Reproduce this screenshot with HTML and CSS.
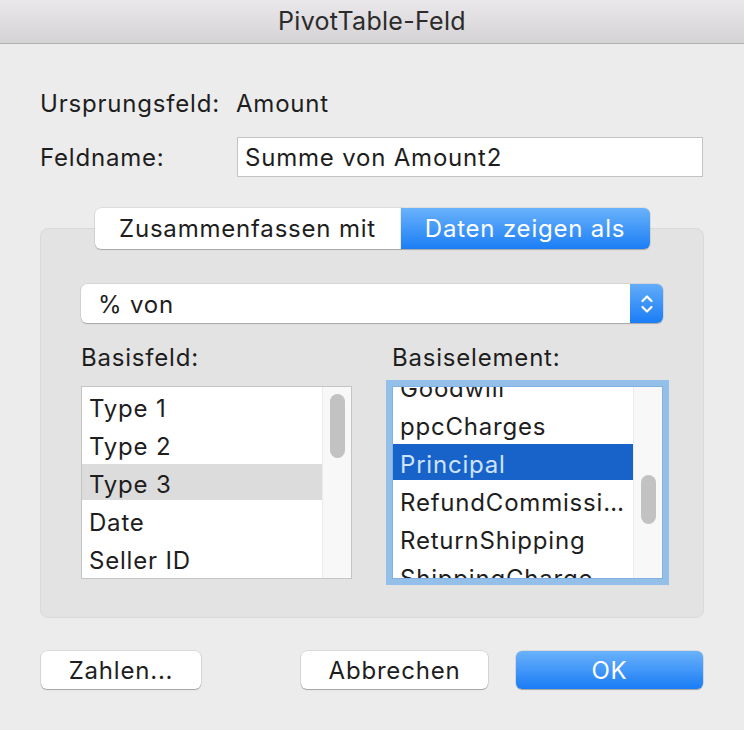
FILE: index.html
```html
<!DOCTYPE html>
<html lang="de">

<head>
  <meta charset="UTF-8" />
  <meta name="viewport" content="width=device-width, initial-scale=1.0" />
  <title>PivotTable-Feld</title>
  <link rel="stylesheet" href="styles.css">
</head>

<body>
  <div class="window">
    <div class="titlebar">PivotTable-Feld</div>

    <div class="content">
      <div class="field-row origin">
        <span class="label">Ursprungsfeld:</span>
        <span class="value">Amount</span>
      </div>
      <div class="field-row">
        <span class="label">Feldname:</span>
        <input class="text-input" type="text" value="Summe von Amount2" />
      </div>

      <div class="group">
        <div class="segmented">
          <button class="seg">Zusammenfassen mit</button>
          <button class="seg active">Daten zeigen als</button>
        </div>

        <div class="popup">
          <span class="popup-text">% von</span>
          <span class="stepper">
            <svg width="14" height="22" viewBox="0 0 14 22">
              <path d="M2.5 8 L7 3.5 L11.5 8" fill="none" stroke="#fff" stroke-width="2.2" stroke-linecap="round" stroke-linejoin="round" />
              <path d="M2.5 14 L7 18.5 L11.5 14" fill="none" stroke="#fff" stroke-width="2.2" stroke-linecap="round" stroke-linejoin="round" />
            </svg>
          </span>
        </div>

        <div class="lists">
          <div class="list-col">
            <div class="list-label">Basisfeld:</div>
            <div class="listbox">
              <ul class="items">
                <li>Type 1</li>
                <li>Type 2</li>
                <li class="selected-gray">Type 3</li>
                <li>Date</li>
                <li>Seller ID</li>
              </ul>
              <div class="scrollbar">
                <div class="thumb thumb-top"></div>
              </div>
            </div>
          </div>

          <div class="list-col">
            <div class="list-label">Basiselement:</div>
            <div class="listbox focused">
              <ul class="items scrolled">
                <li>Goodwill</li>
                <li>ppcCharges</li>
                <li class="selected-blue">Principal</li>
                <li>RefundCommission</li>
                <li>ReturnShipping</li>
                <li>ShippingCharge</li>
              </ul>
              <div class="scrollbar">
                <div class="thumb thumb-mid"></div>
              </div>
            </div>
          </div>
        </div>
      </div>

      <div class="buttons">
        <button class="btn btn-numbers">Zahlen...</button>
        <div class="spacer"></div>
        <button class="btn btn-cancel">Abbrechen</button>
        <button class="btn btn-ok">OK</button>
      </div>
    </div>
  </div>
</body>

</html>
```

FILE: styles.css
```css
* {
  box-sizing: border-box;
}

body {
  margin: 0;
  background: #ececec;
  font-family: Inter, "Noto Sans", sans-serif;
  color: #1e1e1e;
  letter-spacing: 0.8px;
}

.window {
  width: 744px;
  height: 730px;
  background: #ececec;
  overflow: hidden;
}

.titlebar {
  height: 44px;
  line-height: 43px;
  text-align: center;
  font-size: 25px;
  letter-spacing: 0.3px;
  color: #2b2b2b;
  background: linear-gradient(#eae8ea, #d4d2d4);
  border-bottom: 1px solid #b1b1b1;
}

.content {
  padding: 39px 40px 0 40px;
}

.field-row {
  display: flex;
  align-items: center;
  height: 40px;
  font-size: 24px;
}

.field-row+.field-row {
  margin-top: 14px;
}

.field-row .label {
  width: 196px;
  flex: none;
}

.text-input {
  width: 466px;
  height: 40px;
  margin-left: 1px;
  padding: 0 7px;
  border: 1px solid #c3c3c3;
  background: #fff;
  font-family: inherit;
  font-size: 24px;
  letter-spacing: inherit;
  color: #1e1e1e;
  outline: none;
}

/* Gruppenfeld mit Segment-Steuerung */
.group {
  margin-top: 51px;
  padding: 0 40px 38px 40px;
  background: #e3e3e3;
  border: 1px solid #d9d9d9;
  border-radius: 8px;
}

.segmented {
  display: flex;
  justify-content: center;
  margin-top: -21px;
}

.seg {
  height: 41px;
  padding: 0;
  border: none;
  font-family: inherit;
  font-size: 24px;
  letter-spacing: inherit;
  background: #fff;
  color: #1e1e1e;
  box-shadow: 0 1px 1px rgba(0, 0, 0, 0.22), 0 0 0 0.5px rgba(0, 0, 0, 0.12);
}

.seg:first-child {
  width: 306px;
  border-radius: 6px 0 0 6px;
}

.seg.active {
  width: 249px;
  color: #fff;
  border-radius: 0 6px 6px 0;
  background: linear-gradient(#6ab2fb, #1b7ef5);
}

.popup {
  margin-top: 35px;
  height: 39px;
  display: flex;
  align-items: center;
  background: #fff;
  border-radius: 6px;
  box-shadow: 0 1px 1px rgba(0, 0, 0, 0.22), 0 0 0 0.5px rgba(0, 0, 0, 0.12);
  font-size: 24px;
}

.popup-text {
  flex: 1;
  padding-left: 17px;
  padding-top: 1px;
}

.stepper {
  width: 33px;
  height: 39px;
  display: flex;
  align-items: center;
  justify-content: center;
  border-radius: 0 6px 6px 0;
  background: linear-gradient(#62acfa, #1a7df5);
}

.lists {
  margin-top: 20px;
  display: flex;
  gap: 40px;
}

.list-col {
  width: 271px;
}

.list-label {
  height: 30px;
  line-height: 30px;
  font-size: 24px;
  margin-bottom: 13px;
}

.listbox {
  height: 193px;
  display: flex;
  background: #fff;
  border: 1px solid #c4c4c4;
  overflow: hidden;
}

.listbox.focused {
  border-color: #7fb1e3;
  box-shadow: 0 0 0 6px #93bfe8;
}

.items {
  flex: 1;
  min-width: 0;
  margin: 0;
  padding: 0;
  list-style: none;
  font-size: 24px;
}

.items.scrolled {
  margin-top: -20px;
}

.items li {
  height: 38px;
  line-height: 36px;
  padding: 3px 7px 0 7px;
  border-top: 1px solid transparent;
  border-bottom: 1px solid transparent;
  background-clip: padding-box;
  white-space: nowrap;
  overflow: hidden;
  text-overflow: ellipsis;
}

.items li.selected-gray {
  background-color: #dcdcdc;
}

.items li.selected-blue {
  background-color: #1763c9;
  color: #cfe3ff;
}

.scrollbar {
  width: 29px;
  flex: none;
  background: #f8f8f8;
  border-left: 1px solid #ebebeb;
  position: relative;
}

.thumb {
  position: absolute;
  left: 7px;
  width: 15px;
  border-radius: 8px;
  background: #c2c2c2;
}

.thumb-top {
  top: 7px;
  height: 64px;
}

.thumb-mid {
  top: 88px;
  height: 49px;
}

/* Schaltflächen unten */
.buttons {
  margin: 33px 1px 0 1px;
  display: flex;
  align-items: center;
}

.spacer {
  flex: 1;
}

.btn {
  height: 38px;
  padding: 0;
  border: none;
  border-radius: 6px;
  font-family: inherit;
  font-size: 24px;
  letter-spacing: inherit;
  color: #1e1e1e;
  background: #fff;
  box-shadow: 0 1px 1px rgba(0, 0, 0, 0.25), 0 0 0 0.5px rgba(0, 0, 0, 0.15);
}

.btn-numbers {
  width: 160px;
}

.btn-cancel {
  width: 187px;
}

.btn-ok {
  width: 187px;
  margin-left: 28px;
  color: #fff;
  background: linear-gradient(#6ab2fb, #1a7cf5);
}
```
